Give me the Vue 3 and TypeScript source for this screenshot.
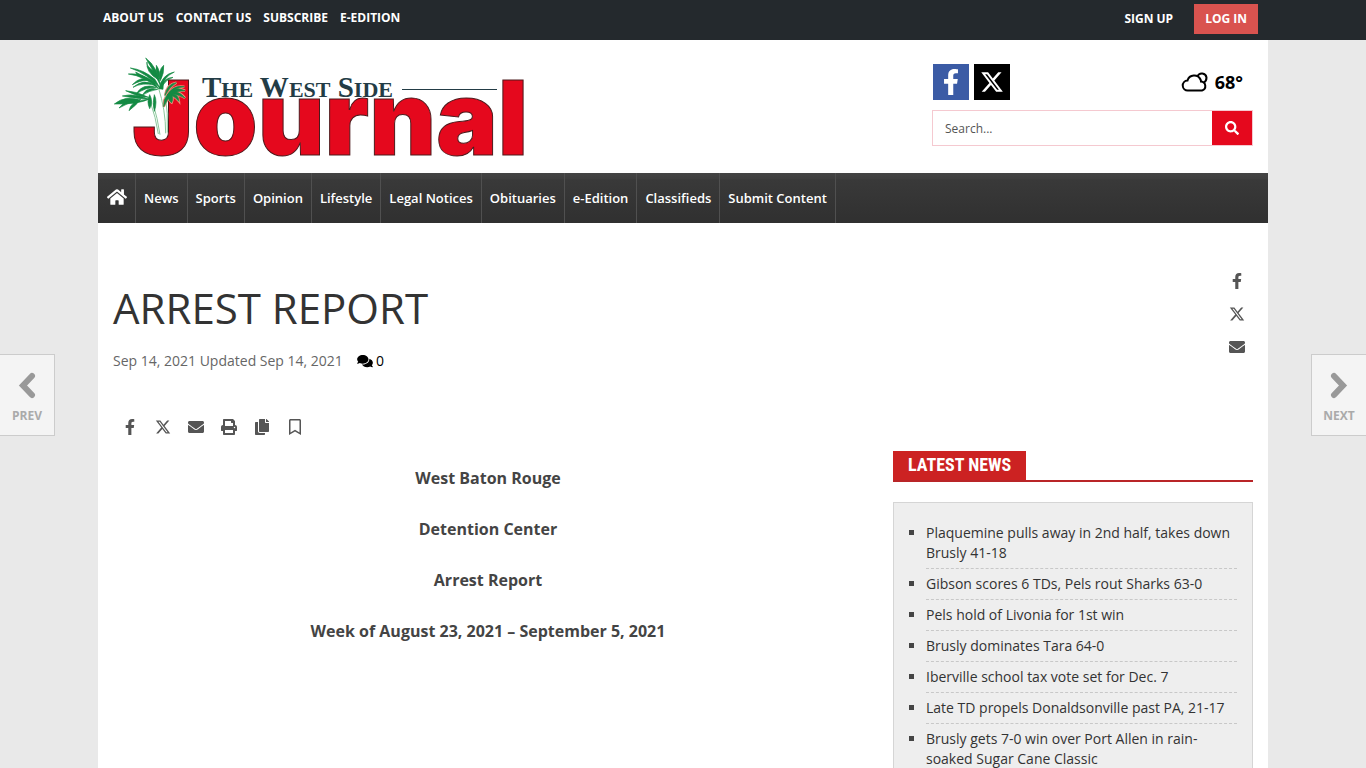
<script setup lang="ts">
interface Icon {
  box: string
  path: string
}

const icons: Record<string, Icon> = {
  facebook: {
    box: '0 0 320 512',
    path: 'M279.14 288l14.22-92.66h-88.91v-60.13c0-25.35 12.42-50.06 52.24-50.06h40.42V6.26S260.43 0 225.36 0c-73.22 0-121.08 44.38-121.08 124.72v70.62H22.89V288h81.39v224h100.17V288z',
  },
  x: {
    box: '0 0 24 24',
    path: 'M18.244 2.25h3.308l-7.227 8.26 8.502 11.24H16.17l-5.214-6.817L4.99 21.75H1.68l7.73-8.835L1.254 2.25H8.08l4.713 6.231zm-1.161 17.52h1.833L7.084 4.126H5.117z',
  },
  envelope: {
    box: '0 0 512 512',
    path: 'M502.3 190.8c3.9-3.1 9.7-.2 9.7 4.7V400c0 26.5-21.5 48-48 48H48c-26.500 0-48-21.500-48-48V195.600c0-5 5.700-7.800 9.700-4.700 22.400 17.400 52.100 39.500 154.100 113.600 21.100 15.400 56.700 47.800 92.200 47.600 35.700.3 72-32.800 92.300-47.600 102-74.100 131.600-96.300 154-113.700zM256 320c23.200.4 56.600-29.200 73.400-41.400 132.700-96.300 142.800-104.700 173.400-128.700 5.800-4.500 9.200-11.500 9.200-18.900v-19c0-26.500-21.500-48-48-48H48c-26.500 0-48 21.500-48 48v19c0 7.400 3.400 14.300 9.200 18.900 30.600 23.900 40.700 32.400 173.400 128.700 16.800 12.200 50.200 41.800 73.400 41.400z',
  },
  print: {
    box: '0 0 512 512',
    path: 'M448 192V77.25c0-8.49-3.37-16.62-9.37-22.63L393.37 9.37c-6-6-14.14-9.37-22.63-9.37H96C78.33 0 64 14.33 64 32v160c-35.350 0-64 28.650-64 64v112c0 8.840 7.160 16 16 16h48v96c0 17.670 14.330 32 32 32h320c17.670 0 32-14.330 32-32v-96h48c8.840 0 16-7.160 16-16V256c0-35.350-28.650-64-64-64zm-64 256H128v-96h256v96zm0-224H128V64h192v48c0 8.840 7.160 16 16 16h48v96zm48 72c-13.250 0-24-10.750-24-24 0-13.260 10.750-24 24-24s24 10.740 24 24c0 13.250-10.750 24-24 24z',
  },
  copy: {
    box: '0 0 448 512',
    path: 'M320 448v40c0 13.255-10.745 24-24 24H24c-13.255 0-24-10.745-24-24V120c0-13.255 10.745-24 24-24h72v296c0 30.879 25.121 56 56 56h168zm0-344V0H152c-13.255 0-24 10.745-24 24v368c0 13.255 10.745 24 24 24h272c13.255 0 24-10.745 24-24V128H344c-13.200 0-24-10.800-24-24zm120.971-31.029L375.029 7.029A24 24 0 0 0 358.059 0H352v96h96v-6.059a24 24 0 0 0-7.029-16.970z',
  },
  bookmark: {
    box: '0 0 384 512',
    path: 'M336 0H48C21.490 0 0 21.490 0 48v464l192-112 192 112V48c0-26.510-21.490-48-48-48zm0 428.430l-144-84-144 84V54a6 6 0 0 1 6-6h276c3.314 0 6 2.683 6 5.996V428.430z',
  },
}

const topLinks = ['About Us', 'Contact Us', 'Subscribe', 'E-Edition']
const sections = ['News', 'Sports', 'Opinion', 'Lifestyle', 'Legal Notices', 'Obituaries', 'e-Edition', 'Classifieds', 'Submit Content']
const railShare = [
  { icon: 'facebook', label: 'Facebook' },
  { icon: 'x', label: 'X' },
  { icon: 'envelope', label: 'Email' },
]
const rowShare = [
  ...railShare,
  { icon: 'print', label: 'Print' },
  { icon: 'copy', label: 'Copy article link' },
  { icon: 'bookmark', label: 'Save' },
]
const paragraphs = ['West Baton Rouge', 'Detention Center', 'Arrest Report', 'Week of August 23, 2021 – September 5, 2021']
const latest = [
  'Plaquemine pulls away in 2nd half, takes down Brusly 41-18',
  'Gibson scores 6 TDs, Pels rout Sharks 63-0',
  'Pels hold of Livonia for 1st win',
  'Brusly dominates Tara 64-0',
  'Iberville school tax vote set for Dec. 7',
  'Late TD propels Donaldsonville past PA, 21-17',
  'Brusly gets 7-0 win over Port Allen in rain-soaked Sugar Cane Classic',
]
const leaves = [
  'M122 24Q158 50 168 110Q146 62 122 24z',
  'M126 36Q122 48 148 64L158 88Q122 66 126 36z',
  'M76 54Q114 58 150 88L166 116Q130 72 76 54z',
  'M70 72Q110 68 148 96L160 116Q118 78 70 72z',
  'M92 66Q96 82 124 84Q104 72 92 66z',
  'M82 104Q110 74 140 92Q110 88 82 104z',
  'M84 112Q118 84 150 106Q112 96 84 112z',
  'M94 132Q112 98 154 112Q120 112 94 132z',
  'M112 136Q126 108 158 118Q132 122 112 136z',
  'M208 66Q170 74 162 116L174 118Q172 82 208 66z',
  'M176 46Q158 62 166 92Q178 70 176 46z',
  'M204 82Q176 84 170 110Q184 88 204 82z',
  'M154 46Q150 66 164 88Q166 62 154 46z',
  'M28 162Q62 134 106 152L136 146Q100 164 28 162z',
  'M42 174Q62 148 100 148Q76 156 42 174z',
  'M72 182Q78 156 108 146Q94 166 72 182z',
  'M52 138Q90 128 132 148Q88 146 52 138z',
  'M62 122Q96 124 130 142Q96 140 62 122z',
  'M134 134Q124 154 134 176Q146 156 134 134z',
  'M148 134Q142 156 148 184Q158 154 148 134z',
  'M240 122Q200 102 178 150L176 170Q198 120 240 122z',
  'M240 144Q218 116 194 134Q220 132 240 144z',
  'M222 154Q220 130 198 134Q212 142 222 154z',
  'M200 158Q208 140 196 130Q184 148 200 158z',
  'M214 98Q186 102 180 136Q194 110 214 98z',
  'M238 110Q204 104 186 136Q208 112 238 110z',
]
</script>

<template>
  <div class="site">
    <header class="topbar">
      <div class="container topbar-inner">
        <nav class="top-links" aria-label="Utility">
          <a v-for="link in topLinks" :key="link" href="#">{{ link }}</a>
        </nav>
        <div class="account">
          <a href="#">Sign Up</a>
          <a href="#" class="login">Log In</a>
        </div>
      </div>
    </header>

    <div class="container page">
      <div class="masthead">
        <a href="#" class="logo" aria-label="The West Side Journal">
          <svg viewBox="0 0 430 119" width="430" height="119">
            <text class="journal" x="19" y="101">Journal</text>
            <text class="westside" x="89" y="43">T<tspan class="sc">HE</tspan> W<tspan class="sc">EST</tspan> S<tspan class="sc">IDE</tspan></text>
            <path d="M289 35.500H384" stroke="#233c46" stroke-width="1" />
            <g transform="translate(-8 -4) scale(.33333)">
              <path d="M132 150Q150 200 158 250Q172 272 186 252Q194 200 184 120L164 110L158 170z" fill="#fff" />
              <g class="halo">
                <path v-for="leaf in leaves.slice(20)" :key="leaf" :d="leaf" />
              </g>
              <g class="stalks">
                <path d="M136 156Q152 200 160 252" />
                <path d="M144 160Q158 205 165 254" />
                <path d="M160 112Q182 180 182 250" />
                <path d="M180 130Q190 190 187 248" />
              </g>
              <g class="leaves">
                <path v-for="leaf in leaves" :key="leaf" :d="leaf" />
              </g>
            </g>
          </svg>
        </a>

        <div class="masthead-side">
          <div class="side-top">
            <div class="social">
              <a href="#" class="fb" aria-label="Facebook">
                <svg :viewBox="icons.facebook.box" width="20" height="26"><path :d="icons.facebook.path" /></svg>
              </a>
              <a href="#" class="tw" aria-label="X">
                <svg :viewBox="icons.x.box" width="24" height="24"><path :d="icons.x.path" /></svg>
              </a>
            </div>
            <a href="#" class="weather">
              <svg class="cloud" viewBox="0 0 28 22" width="28" height="22">
                <path d="M16.500 5.500A4.700 4.700 0 0 1 25.500 6.500Q25.500 10 23 11.500" />
                <path d="M7 19.500A5 5 0 0 1 6.500 9.500A7 7 0 0 1 19.500 8.500Q20 9.500 20 10.500A4.600 4.600 0 0 1 21 19.500z" />
              </svg>
              <span>68°</span>
            </a>
          </div>
          <form class="search" role="search" @submit.prevent>
            <input type="search" placeholder="Search..." aria-label="Search" />
            <button type="submit" aria-label="Search">
              <svg viewBox="0 0 512 512" width="14" height="14"><path d="M505 442.700L405.300 343c-4.500-4.500-10.600-7-17-7H372c27.600-35.300 44-79.700 44-128C416 93.100 322.900 0 208 0S0 93.100 0 208s93.100 208 208 208c48.300 0 92.700-16.400 128-44v16.300c0 6.400 2.500 12.500 7 17l99.700 99.700c9.400 9.400 24.600 9.400 33.900 0l28.300-28.300c9.400-9.400 9.400-24.600.1-34zM208 336c-70.700 0-128-57.200-128-128 0-70.700 57.200-128 128-128 70.700 0 128 57.200 128 128 0 70.700-57.200 128-128 128z" /></svg>
            </button>
          </form>
        </div>
      </div>

      <nav class="mainnav" aria-label="Sections">
        <a href="#" class="home" aria-label="Home">
          <svg viewBox="0 0 576 512" width="20" height="18"><path d="M280.370 148.260L96 300.110V464a16 16 0 0 0 16 16l112.060-.29a16 16 0 0 0 15.920-16V368a16 16 0 0 1 16-16h64a16 16 0 0 1 16 16v95.640a16 16 0 0 0 16 16.050L464 480a16 16 0 0 0 16-16V300L295.670 148.260a12.190 12.190 0 0 0-15.300 0zM571.600 251.470L488 182.560V44.050a12 12 0 0 0-12-12h-56a12 12 0 0 0-12 12v72.610L318.470 43a48 48 0 0 0-61 0L4.340 251.470a12 12 0 0 0-1.600 16.900l25.500 31A12 12 0 0 0 45.150 301l235.220-193.740a12.190 12.190 0 0 1 15.300 0L530.900 301a12 12 0 0 0 16.900-1.600l25.500-31a12 12 0 0 0-1.700-16.930z" /></svg>
        </a>
        <a v-for="section in sections" :key="section" href="#">{{ section }}</a>
      </nav>

      <main class="content">
        <div class="headline-row">
          <div>
            <h1>ARREST REPORT</h1>
            <div class="meta">
              <span>Sep 14, 2021 Updated Sep 14, 2021</span>
              <a href="#" class="comments" aria-label="0 comments">
                <svg viewBox="0 0 576 512" width="16" height="14"><path d="M416 192c0-88.400-93.100-160-208-160S0 103.600 0 192c0 34.300 14.100 65.900 38 92-13.400 30.200-35.500 54.200-35.800 54.500-2.200 2.300-2.800 5.700-1.500 8.700S4.800 352 8 352c36.600 0 66.900-12.300 88.700-25 32.200 15.700 70.300 25 111.300 25 114.900 0 208-71.600 208-160zm122 220c23.900-26 38-57.700 38-92 0-66.900-53.500-124.200-129.300-148.100.9 6.600 1.300 13.300 1.300 20.100 0 105.900-107.700 192-240 192-10.800 0-21.300-.8-31.700-1.900C207.800 439.600 281.800 480 368 480c41 0 79.100-9.200 111.300-25 21.800 12.700 52.100 25 88.700 25 3.200 0 6.100-1.900 7.300-4.800 1.300-2.900.7-6.300-1.500-8.700-.3-.3-22.400-24.200-35.800-54.500z" /></svg>
                <span>0</span>
              </a>
            </div>
          </div>
          <div class="share rail">
            <a v-for="item in railShare" :key="item.icon" href="#" :aria-label="item.label">
              <svg :viewBox="icons[item.icon].box" width="16" height="16"><path :d="icons[item.icon].path" /></svg>
            </a>
          </div>
        </div>

        <div class="share">
          <a v-for="item in rowShare" :key="item.icon" href="#" :aria-label="item.label">
            <svg :viewBox="icons[item.icon].box" width="16" height="16"><path :d="icons[item.icon].path" /></svg>
          </a>
        </div>

        <div class="columns">
          <article>
            <p v-for="text in paragraphs" :key="text"><strong>{{ text }}</strong></p>
          </article>
          <aside>
            <div class="block-title"><h2>LATEST NEWS</h2></div>
            <ul class="latest">
              <li v-for="title in latest" :key="title"><a href="#">{{ title }}</a></li>
            </ul>
          </aside>
        </div>
      </main>
    </div>

    <a href="#" class="pager prev">
      <svg viewBox="0 0 20 28" width="20" height="28"><path d="M15 4L6 13.500L15 23" /></svg>
      <span>PREV</span>
    </a>
    <a href="#" class="pager next">
      <svg viewBox="0 0 20 28" width="20" height="28"><path d="M5 4L14 13.500L5 23" /></svg>
      <span>NEXT</span>
    </a>
  </div>
</template>

<style>
body {
  margin: 0;
  background: #e9e9e9;
}
</style>

<style scoped>
.site {
  height: 100vh;
  overflow: hidden;
  font-family: "Open Sans", "Liberation Sans", sans-serif;
  color: #333;
}
.site * {
  box-sizing: border-box;
}
a {
  color: inherit;
  text-decoration: none;
}
svg {
  display: block;
  fill: currentColor;
}
.container {
  max-width: 1170px;
  margin: 0 auto;
}
.topbar {
  background: #24292d;
  color: #fff;
  font-size: 12px;
  font-weight: 700;
  text-transform: uppercase;
}
.topbar-inner {
  display: flex;
  justify-content: space-between;
  height: 40px;
  padding: 4px 10px 0 5px;
}
.top-links {
  display: flex;
  gap: 12px;
  line-height: 27px;
}
.account {
  display: flex;
  gap: 21px;
  line-height: 30px;
}
.login {
  height: 30px;
  padding: 0 11px;
  background: #d9534f;
}
.page {
  min-height: calc(100vh - 40px);
  background: #fff;
}
.masthead {
  display: flex;
  justify-content: space-between;
  height: 133px;
  padding: 14px 15px 0;
}
.journal {
  font-family: Inter, "Liberation Sans", sans-serif;
  font-size: 103px;
  font-weight: 900;
  fill: #e5081d;
  stroke: #4a1a1c;
  stroke-width: 1px;
}
.westside {
  font-family: "Liberation Serif", serif;
  font-size: 29px;
  font-weight: 700;
  fill: #233c46;
}
.sc {
  font-size: 22px;
}
.leaves {
  fill: #138a43;
  stroke: #138a43;
  stroke-width: 2;
}
.halo {
  fill: #f08a78;
  stroke: #f08a78;
  stroke-width: 7;
}
.stalks {
  fill: none;
  stroke: #8cc79c;
  stroke-width: 3;
}
.masthead-side {
  width: 321px;
  padding-top: 10px;
}
.side-top {
  display: flex;
  justify-content: space-between;
  align-items: center;
  padding: 0 10px 0 1px;
}
.social {
  display: flex;
  gap: 5px;
}
.social a {
  display: flex;
  align-items: center;
  justify-content: center;
  width: 36px;
  height: 36px;
  color: #fff;
}
.fb {
  background: #3b5ba5;
}
.tw {
  background: #000;
}
.weather {
  display: flex;
  align-items: center;
  gap: 6px;
  color: #000;
  font-size: 18px;
  font-weight: 700;
}
.cloud {
  fill: none;
  stroke: #000;
  stroke-width: 2;
}
.search {
  display: flex;
  height: 36px;
  margin-top: 10px;
  border: 1px solid #f5c9d0;
}
.search input {
  flex: 1;
  min-width: 0;
  padding: 0 12px;
  border: 0;
  border-radius: 0;
  outline: 0;
  background: #fff;
  font-family: inherit;
  font-size: 12px;
}
.search input::placeholder {
  color: #555;
}
.search button {
  display: flex;
  align-items: center;
  justify-content: center;
  width: 40px;
  padding: 0;
  border: 0;
  background: #e5081d;
  color: #fff;
}
.mainnav {
  display: flex;
  height: 50px;
  background: linear-gradient(#444 0, #3f3f3f 6px, #393939 7px, #303030 100%);
  color: #fff;
  font-size: 13px;
  font-weight: 600;
  line-height: 50px;
}
.mainnav a {
  padding: 0 8px;
  border-right: 1px solid #505050;
}
.mainnav .home {
  padding: 15px 8px 0 9px;
}
.content {
  padding: 41px 15px 0;
}
.headline-row {
  display: flex;
  justify-content: space-between;
}
h1 {
  margin: 20px 0 0;
  font-size: 42px;
  font-weight: 400;
  line-height: 48px;
}
.meta {
  display: flex;
  gap: 14px;
  margin-top: 19px;
  color: #666;
  font-size: 14px;
  line-height: 20px;
}
.comments {
  display: flex;
  align-items: center;
  gap: 3px;
  color: #000;
}
.share {
  display: flex;
  color: #555;
}
.share a {
  display: flex;
  align-items: center;
  justify-content: center;
  width: 33px;
  height: 33px;
}
.rail {
  flex-direction: column;
}
.headline-row + .share {
  margin-top: 39px;
}
.columns {
  display: grid;
  grid-template-columns: minmax(0, 750fr) minmax(0, 360fr);
  gap: 30px;
  margin-top: 8px;
}
article {
  padding-top: 14px;
  color: #444;
  font-size: 16px;
  line-height: 26px;
  text-align: center;
}
article p {
  margin: 0 0 25px;
}
.block-title {
  display: flex;
  border-bottom: 2px solid #b92528;
}
.block-title h2 {
  margin: 0;
  padding: 0 15px 2px;
  background: #cc2222;
  color: #fff;
  font-family: "Roboto Condensed", Roboto, sans-serif;
  font-size: 18px;
  font-weight: 700;
  line-height: 27px;
}
.latest {
  margin: 20px 0 0;
  padding: 20px 15px 20px 32px;
  border: 1px solid #d5d5d5;
  background: #eee;
  font-size: 14px;
  line-height: 20px;
  list-style: none;
}
.latest li {
  position: relative;
  margin-bottom: 5px;
  padding-bottom: 5px;
  border-bottom: 1px dashed #c8c8c8;
}
.latest li::before {
  content: "";
  position: absolute;
  top: 7px;
  left: -17px;
  width: 5px;
  height: 5px;
  background: #444;
}
.pager {
  position: fixed;
  top: 354px;
  display: flex;
  flex-direction: column;
  align-items: center;
  width: 55px;
  height: 82px;
  padding-top: 17px;
  border: 1px solid #ccc;
  background: #f4f4f4;
  color: #aaa;
  font-size: 12px;
  font-weight: 700;
  line-height: 32px;
}
.pager path {
  fill: none;
  stroke: #999;
  stroke-width: 6;
  stroke-linecap: round;
}
.prev {
  left: 0;
  border-left: 0;
}
.next {
  right: 0;
  border-right: 0;
}
</style>
